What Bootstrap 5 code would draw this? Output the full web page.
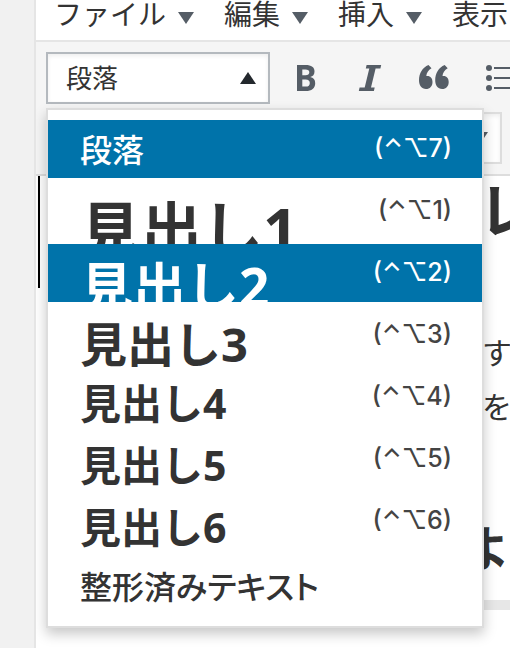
<!DOCTYPE html>
<html lang="ja">
<head>
<meta charset="utf-8">
<meta name="viewport" content="width=device-width, initial-scale=1">
<title>エディター</title>
<link href="https://cdn.jsdelivr.net/npm/bootstrap@5.3.0/dist/css/bootstrap.min.css" rel="stylesheet">
<style>
body { background: #f1f1f1; color: #32373c; font-family: "Open Sans", "Noto Sans CJK JP", sans-serif; }
button { background: none; border: 0; padding: 0; color: inherit; }
.editor { margin-left: 34px; border-left: 2px solid #e5e5e5; min-height: 100vh; }
.menubar { padding: 0 18px 12px; gap: 30px; border-bottom: 2px solid #e5e5e5; color: #333; }
.menubar button { gap: 12px; font-size: 28px; line-height: 28px; }
.caret { border: 8px solid transparent; border-top: 12px solid #555d66; border-bottom: 0; }
.caret-up { border-top: 0; border-bottom: 12px solid #23282d; }
.toolbar { background: #f5f5f5; border-bottom: 2px solid #ddd; padding: 10px; gap: 8px; color: #555d66; }
.format-select { width: 224px; height: 52px; padding: 0 12px 0 18px; border: 2px solid #b4b9be; background: #fff; font-size: 26px; color: #333; box-shadow: inset 0 2px 4px rgba(0,0,0,.07); }
.tool { width: 64px; height: 52px; }
.tool svg { width: 40px; height: 40px; }
.tools { margin-left: 4px; }
.size-select { width: 456px; height: 52px; padding-right: 12px; border: 2px solid #ddd; background: #fff; box-shadow: inset 0 2px 4px rgba(0,0,0,.07); }
.format-menu { left: 0; top: 56px; width: 438px; padding: 10px 0; background: #fff; border: 2px solid #ddd; box-shadow: 0 6px 12px rgba(0,0,0,.22); z-index: 5; color: #333; }
.format-item { height: 58px; margin-bottom: 4px; padding: 0 30px 0 32px; }
.format-item.active { background: #0073aa; color: #fff; }
.format-item kbd { padding: 0; background: none; color: #444; font: 500 25px/56px Inter, "DejaVu Sans", sans-serif; }
.format-item.active kbd { color: #fff; }
.fmt-text { font-size: 32px; line-height: 60px; font-weight: 500; font-feature-settings: "palt"; }
.fmt-pre { line-height: 66px; }
.fmt-h { font-weight: 700; }
.fmt-h1 { font-size: 61px; line-height: 96px; }
.fmt-h2 { font-size: 53px; line-height: 86px; }
.fmt-h3 { font-size: 47px; line-height: 76px; }
.fmt-h4 { font-size: 41px; line-height: 70px; }
.doc { color: #333; }
.doc-title { margin: 0 0 38px 2px; border-left: 2px solid #000; height: 112px; padding-left: 438px; font-size: 60px; font-weight: 700; line-height: 68px; }
.doc-text { margin: 0; padding-left: 446px; font-size: 30px; line-height: 54px; }
.doc-sub { margin: 80px 0 0 20px; padding-left: 406px; font-size: 48px; font-weight: 700; line-height: 68px; padding-bottom: 18px; border-bottom: 10px solid #e7e7e7; }
</style>
</head>
<body class="overflow-hidden">
<main class="editor bg-white overflow-hidden">
  <nav class="menubar d-flex text-nowrap" aria-label="メニュー">
    <button type="button" class="d-flex align-items-center flex-shrink-0">ファイル<span class="caret mt-2"></span></button>
    <button type="button" class="d-flex align-items-center flex-shrink-0">編集<span class="caret mt-2"></span></button>
    <button type="button" class="d-flex align-items-center flex-shrink-0">挿入<span class="caret mt-2"></span></button>
    <button type="button" class="d-flex align-items-center flex-shrink-0">表示<span class="caret mt-2"></span></button>
  </nav>
  <div class="toolbar d-flex flex-column" role="toolbar">
    <div class="d-flex">
      <div class="position-relative flex-shrink-0">
        <button type="button" class="format-select d-flex align-items-center justify-content-between" aria-haspopup="menu" aria-expanded="true">段落<span class="caret caret-up"></span></button>
        <div class="format-menu position-absolute" role="menu">
          <button type="button" role="menuitem" class="format-item active position-relative d-flex w-100 justify-content-between align-items-start text-nowrap"><span class="fmt-text">段落</span><kbd>(⌃⌥7)</kbd></button>
          <button type="button" role="menuitem" class="format-item position-relative d-flex w-100 justify-content-between align-items-start text-nowrap"><span class="fmt-h fmt-h1">見出し1</span><kbd>(⌃⌥1)</kbd></button>
          <button type="button" role="menuitem" class="format-item active position-relative d-flex w-100 justify-content-between align-items-start text-nowrap"><span class="fmt-h fmt-h2">見出し2</span><kbd>(⌃⌥2)</kbd></button>
          <button type="button" role="menuitem" class="format-item position-relative d-flex w-100 justify-content-between align-items-start text-nowrap"><span class="fmt-h fmt-h3">見出し3</span><kbd>(⌃⌥3)</kbd></button>
          <button type="button" role="menuitem" class="format-item position-relative d-flex w-100 justify-content-between align-items-start text-nowrap"><span class="fmt-h fmt-h4">見出し4</span><kbd>(⌃⌥4)</kbd></button>
          <button type="button" role="menuitem" class="format-item position-relative d-flex w-100 justify-content-between align-items-start text-nowrap"><span class="fmt-h fmt-h4">見出し5</span><kbd>(⌃⌥5)</kbd></button>
          <button type="button" role="menuitem" class="format-item position-relative d-flex w-100 justify-content-between align-items-start text-nowrap"><span class="fmt-h fmt-h4">見出し6</span><kbd>(⌃⌥6)</kbd></button>
          <button type="button" role="menuitem" class="format-item position-relative d-flex w-100 justify-content-between align-items-start text-nowrap"><span class="fmt-text fmt-pre">整形済みテキスト</span></button>
        </div>
      </div>
      <div class="tools d-flex">
        <button type="button" class="tool flex-shrink-0" aria-label="太字"><svg viewBox="0 0 40 40" fill="currentColor"><path fill-rule="evenodd" d="M11 7h8.500c6 0 9 2.200 9 6.500 0 3-1.500 5-4.300 5.500 3.300.6 5 2.700 5 6.200 0 5-3.500 7.800-9.500 7.800H11zM16.300 11.500v5.700h3.200c2.500 0 3.800-1 3.800-3 0-1.900-1.300-2.700-3.900-2.700zM16.300 21.400v7.200h3.500c2.700 0 4-1.300 4-3.700 0-2.300-1.400-3.500-4.200-3.500z"/></svg></button>
        <button type="button" class="tool flex-shrink-0" aria-label="斜体"><svg viewBox="0 0 40 40" fill="currentColor"><path d="M16.600 7h14.600l-.8 3.600h-4.800l-4.600 18.800h3.700L23.900 33H8.800l.8-3.600h5.100l4.600-18.800h-3.500z"/></svg></button>
        <button type="button" class="tool flex-shrink-0" aria-label="引用"><svg viewBox="0 0 40 40" fill="currentColor"><path d="M14.500 7l3 3.300c-3.200 2-5 4.500-5.200 7.700 3.800-.6 6.200 2 6.200 6 0 4.300-2.600 7-6.500 7C7.500 31 5 27.500 5 22.300 5 15 8.500 9.600 14.500 7z"/><path d="M30.700 7l3 3.300c-3.200 2-5 4.500-5.200 7.700 3.800-.6 6.200 2 6.200 6 0 4.300-2.600 7-6.500 7-4.500 0-7-3.500-7-8.700 0-7.300 3.500-12.700 9.500-15.300z"/></svg></button>
        <button type="button" class="tool flex-shrink-0" aria-label="箇条書き"><svg viewBox="0 0 40 40" fill="currentColor"><circle cx="11" cy="10" r="3"/><circle cx="11" cy="20" r="3"/><circle cx="11" cy="30" r="3"/><path d="M16 9h20v2H16zM16 19h20v2H16zM16 29h20v2H16z"/></svg></button>
      </div>
    </div>
    <button type="button" class="size-select d-flex align-items-center justify-content-end" aria-label="文字サイズ"><span class="caret"></span></button>
  </div>
  <article class="doc text-nowrap">
    <h1 class="doc-title">レ</h1>
    <p class="doc-text">す<br>を</p>
    <h2 class="doc-sub">よ</h2>
  </article>
</main>
<script src="https://cdn.jsdelivr.net/npm/bootstrap@5.3.0/dist/js/bootstrap.bundle.min.js"></script>
</body>
</html>
